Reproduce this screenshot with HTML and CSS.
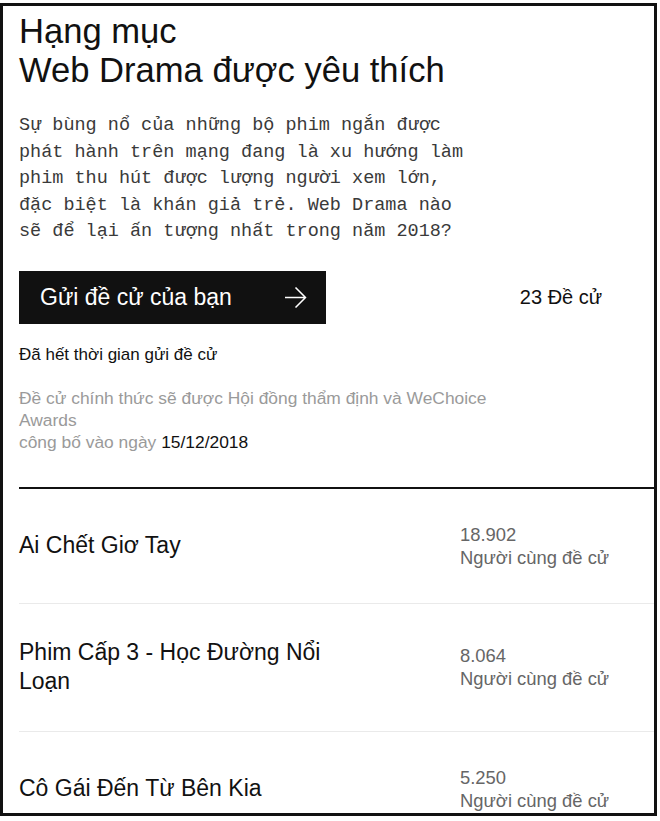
FILE: index.html
```html
<!doctype html>
<html lang="vi">
  <head>
    <meta charset="UTF-8" />
    <meta name="viewport" content="width=device-width, initial-scale=1.0" />
    <title>Hạng mục Web Drama được yêu thích - WeChoice Awards</title>
    <link rel="stylesheet" href="styles.css">
  </head>
  <body>
    <div class="frame">
      <section class="intro">
        <h1 class="title">Hạng mục<br />Web Drama được yêu thích</h1>
        <p class="lead">
          Sự bùng nổ của những bộ phim ngắn được phát hành trên mạng đang là xu hướng làm
          phim thu hút được lượng người xem lớn, đặc biệt là khán giả trẻ. Web Drama nào
          sẽ để lại ấn tượng nhất trong năm 2018?
        </p>

        <div class="action">
          <a class="submit" href="#">
            <span>Gửi đề cử của bạn</span>
            <svg class="submit-arrow" width="22" height="21" viewBox="0 0 22 21" aria-hidden="true">
              <path d="M0 10.5H20.5M10.5 0.5L20.5 10.5L10.5 20.5" fill="none" stroke="#fff" stroke-width="1.5" />
            </svg>
          </a>
          <div class="count">23 Đề cử</div>
        </div>

        <p class="closed">Đã hết thời gian gửi đề cử</p>
        <p class="note">
          Đề cử chính thức sẽ được Hội đồng thẩm định và WeChoice Awards<br />
          công bố vào ngày <span class="date">15/12/2018</span>
        </p>
      </section>

      <ul class="nominees">
        <li class="nominee">
          <div class="nominee-name">Ai Chết Giơ Tay</div>
          <div class="votes">18.902<br />Người cùng đề cử</div>
        </li>
        <li class="nominee">
          <div class="nominee-name">Phim Cấp 3 - Học Đường Nổi Loạn</div>
          <div class="votes">8.064<br />Người cùng đề cử</div>
        </li>
        <li class="nominee">
          <div class="nominee-name">Cô Gái Đến Từ Bên Kia</div>
          <div class="votes">5.250<br />Người cùng đề cử</div>
        </li>
      </ul>
    </div>
  </body>
</html>
```

FILE: styles.css
```css
* {
  margin: 0;
  padding: 0;
  box-sizing: border-box;
}

body {
  font-family: "Liberation Sans", Arial, sans-serif;
  background: #fff;
  color: #111;
}

.frame {
  width: 657px;
  height: 813px;
  margin-top: 3px;
  border: 3px solid #111;
  padding-left: 16px;
  overflow: hidden;
}

.intro {
  padding-top: 6px;
}

.title {
  font-size: 34.6px;
  line-height: 39px;
  font-weight: 400;
}

.lead {
  max-width: 452px;
  margin-top: 23px;
  font-family: "Liberation Mono", "DejaVu Sans Mono", monospace;
  font-size: 18.5px;
  line-height: 26.5px;
  color: #3a3a3a;
}

.action {
  display: grid;
  grid-template-columns: 1fr 194px;
  align-items: center;
  margin-top: 25px;
}

.submit {
  width: 307px;
  height: 53px;
  padding: 0 19px 0 21px;
  display: flex;
  align-items: center;
  justify-content: space-between;
  background: #111;
  color: #fff;
  font-size: 23px;
  text-decoration: none;
}

.count {
  padding-left: 8px;
  text-align: center;
  font-size: 20px;
}

.closed {
  margin-top: 20px;
  font-size: 17px;
  line-height: 22px;
}

.note {
  max-width: 475px;
  margin-top: 21px;
  font-size: 17.4px;
  line-height: 22px;
  color: #9a9a9a;
}

.note .date {
  color: #111;
}

.nominees {
  list-style: none;
  margin-top: 34px;
  border-top: 2px solid #111;
}

.nominee {
  display: grid;
  grid-template-columns: 1fr 194px;
  align-items: center;
  padding: 34px 0;
  border-bottom: 1px solid #eaeaea;
}

.nominee-name {
  padding-right: 110px;
  font-size: 23px;
  line-height: 29.5px;
}

.votes {
  font-size: 18.4px;
  line-height: 23px;
  color: #666;
}
```
